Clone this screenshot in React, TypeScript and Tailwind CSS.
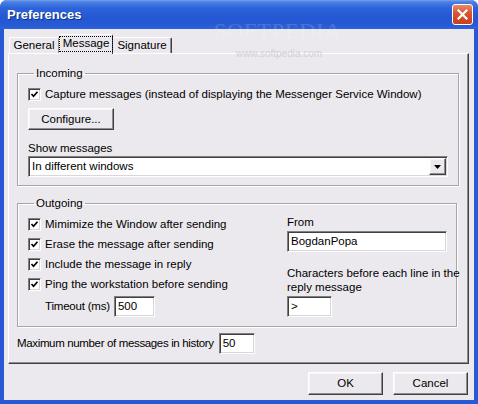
import type { ReactNode } from "react";

const sunken =
  "border border-t-[#7f7f7f] border-l-[#7f7f7f] border-r-white border-b-white shadow-[inset_1px_1px_0_#404040,inset_-1px_-1px_0_#d8d6da]";
const raised =
  "border border-t-white border-l-white border-r-[#404040] border-b-[#404040] shadow-[inset_-1px_-1px_0_#8e8d91,inset_1px_1px_0_#f6f5f8]";

function CheckBox() {
  return (
    <span className={`flex h-[13px] w-[13px] shrink-0 items-center justify-center bg-white ${sunken}`}>
      <svg width="9" height="9" viewBox="0 0 9 9">
        <polyline points="1.5,4 3.5,6.2 7.5,1.8" fill="none" stroke="#000" strokeWidth="1.7" />
      </svg>
    </span>
  );
}

function CheckRow({ children }: { children: ReactNode }) {
  return (
    <div className="flex h-[20px] items-center gap-[4px]">
      <CheckBox />
      <span className="whitespace-nowrap leading-[13px]">{children}</span>
    </div>
  );
}

function TextField({ value, className }: { value: string; className: string }) {
  return (
    <div className={`flex h-[21px] shrink-0 items-center bg-white pl-[3px] leading-[13px] ${sunken} ${className}`}>
      {value}
    </div>
  );
}

function Button({ label, className }: { label: string; className: string }) {
  return (
    <div className={`flex items-center justify-center bg-[#ebe9ed] leading-[13px] ${raised} ${className}`}>
      {label}
    </div>
  );
}

function Group({ title, children, className }: { title: string; children: ReactNode; className?: string }) {
  return (
    <fieldset
      className={`border border-[#a6a5aa] shadow-[1px_1px_0_#ffffff,inset_1px_1px_0_#ffffff] ${className ?? ""}`}
    >
      <legend className="ml-[6px] px-[2px] leading-[13px]">{title}</legend>
      {children}
    </fieldset>
  );
}

export default function App() {
  return (
    <div className="relative flex h-[404px] w-[478px] flex-col overflow-hidden rounded-t-[7px] bg-[#2659d3] font-['Liberation_Sans',Arial,sans-serif] text-[11.5px] text-black">
      {/* title bar */}
      <div className="flex h-[29px] shrink-0 items-center bg-[linear-gradient(to_bottom,#78a4ec_0px,#4a80e4_2px,#2d63da_8px,#2457d2_18px,#2659d3_24px,#2e63da_29px)] pl-[7px] pr-[5px]">
        <span className="text-[13px] font-bold text-white [text-shadow:1px_1px_0_#10337e]">Preferences</span>
        <div className="ml-auto flex h-[21px] w-[21px] items-center justify-center rounded-[3px] border border-white bg-[linear-gradient(to_bottom,#e98a6c,#d9532c_45%,#c8401c)]">
          <svg width="11" height="11" viewBox="0 0 11 11">
            <path d="M1.5 1.5 L9.5 9.5 M9.5 1.5 L1.5 9.5" stroke="#fff" strokeWidth="2.2" strokeLinecap="square" />
          </svg>
        </div>
      </div>

      {/* watermark */}
      <div className="pointer-events-none absolute left-[214px] top-[20px] font-['Liberation_Serif',serif] text-[22px] leading-[22px] tracking-[1px] text-white opacity-15">
        SOFTPEDIA
      </div>
      <div className="pointer-events-none absolute left-[236px] top-[49px] text-[10px] leading-[10px] text-[#d2d0d6]">
        www.softpedia.com
      </div>

      {/* client area */}
      <div className="mx-[4px] mb-[4px] flex flex-1 flex-col bg-[#ebe9ed] pl-[4px] pr-[5px] pt-[5px]">
        {/* tabs */}
        <div className="flex h-[19px] items-end pl-[1px]">
          <div className="flex h-[16px] w-[50px] items-center justify-center rounded-t-[2px] border-l border-t border-r border-l-white border-t-white border-r-[#8e8d91] leading-[13px]">
            General
          </div>
          <div className="relative z-10 -mb-px flex h-[20px] w-[54px] items-start justify-center rounded-t-[2px] border-l border-t border-r border-l-white border-t-white border-r-[#404040] bg-[#ebe9ed] pt-[1px]">
            <span className="border border-dotted border-black px-[3px] pb-[1px] leading-[13px]">Message</span>
          </div>
          <div className="flex h-[16px] w-[59px] items-center justify-center rounded-t-[2px] border-t border-r border-t-white border-r-[#404040] leading-[13px] shadow-[inset_-1px_0_0_#8e8d91]">
            Signature
          </div>
        </div>

        {/* tab panel */}
        <div className="flex h-[311px] shrink-0 flex-col border border-l-white border-t-white border-r-[#404040] border-b-[#404040] pl-[8px] pr-[11px] pt-[13px] shadow-[inset_-1px_-1px_0_#8e8d91]">
          <Group title="Incoming" className="pb-[8px] pl-[10px] pr-[10px]">
            <div className="mt-[8px] flex h-[13px] items-center gap-[4px]">
              <CheckBox />
              <span className="whitespace-nowrap leading-[13px]">
                Capture messages (instead of displaying the Messenger Service Window)
              </span>
            </div>
            <Button label="Configure..." className="mt-[7px] h-[22px] w-[86px]" />
            <div className="mt-[12px] leading-[13px]">Show messages</div>
            <div className={`mt-px flex h-[21px] w-[420px] items-center bg-white pl-[3px] ${sunken}`}>
              <span className="flex-1 leading-[13px]">In different windows</span>
              <div className={`mr-px flex h-[17px] w-[17px] items-center justify-center bg-[#ebe9ed] ${raised}`}>
                <svg width="7" height="4" viewBox="0 0 7 4">
                  <path d="M0 0 H7 L3.5 4 Z" fill="#000" />
                </svg>
              </div>
            </div>
          </Group>

          <Group title="Outgoing" className="mt-[11px] pb-[9px] pl-[10px] pr-[9px]">
            <div className="flex">
              <div className="mt-[4px] flex flex-col">
                <CheckRow>Mimimize the Window after sending</CheckRow>
                <CheckRow>Erase the message after sending</CheckRow>
                <CheckRow>Include the message in reply</CheckRow>
                <CheckRow>Ping the workstation before sending</CheckRow>
                <div className="mt-[2px] flex items-center gap-[4px] pl-[17px]">
                  <span className="whitespace-nowrap leading-[13px] tracking-[-0.2px]">Timeout (ms)</span>
                  <TextField value="500" className="w-[41px]" />
                </div>
              </div>
              <div className="ml-auto flex w-[160px] flex-col pt-[6px]">
                <div className="leading-[13px]">From</div>
                <TextField value="BogdanPopa" className="mt-[2px] w-[160px]" />
                <div className="mt-[14px] whitespace-nowrap leading-[14px]">
                  Characters before each line in the
                  <br />
                  reply message
                </div>
                <TextField value=">" className="mt-[2px] w-[45px]" />
              </div>
            </div>
          </Group>

          <div className="mt-[6px] flex items-center gap-[5px]">
            <span className="whitespace-nowrap leading-[13px] tracking-[-0.35px]">
              Maximum number of messages in history
            </span>
            <TextField value="50" className="w-[36px]" />
          </div>
        </div>

        {/* dialog buttons */}
        <div className="mt-[8px] flex justify-end gap-[10px] pr-px">
          <Button label="OK" className="h-[23px] w-[75px]" />
          <Button label="Cancel" className="h-[23px] w-[75px]" />
        </div>
      </div>
    </div>
  );
}
